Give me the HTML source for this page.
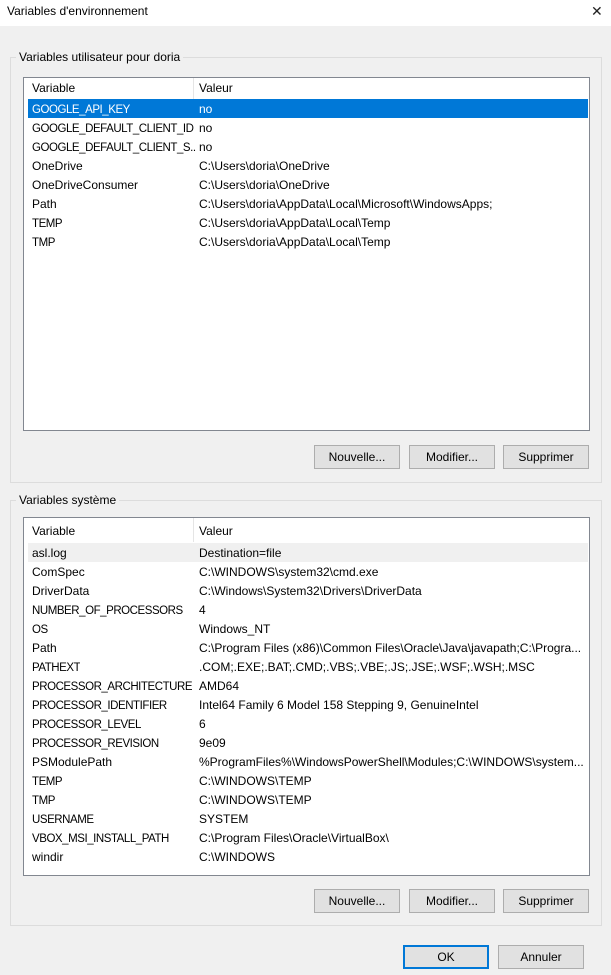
<!DOCTYPE html>
<html><head><meta charset="utf-8"><style>
*{margin:0;padding:0;box-sizing:border-box}
body{width:611px;height:975px;background:#f0f0f0;font-family:"Liberation Sans",sans-serif;font-size:12px;color:#000;position:relative;overflow:hidden}
.title{position:absolute;left:0;top:0;width:611px;height:26px;background:#fff}
.tt{position:absolute;left:7px;top:4px;font-size:12px}
.x{position:absolute;left:591px;top:3px;font-size:14px;color:#222}
.grp{position:absolute;border:1px solid #dcdcdc}
.lg{position:absolute;background:#f0f0f0;padding:0 3px}
.list{position:absolute;background:#fff;border:1px solid #828790}
.hdr{position:absolute;left:0;top:0;height:21px;width:100%}
.hdr .c{position:absolute;top:3px}
.vd{position:absolute;top:0;height:21px;border-left:1px solid #e5e5e5}
.row{position:absolute;left:4px;right:1px;height:19px;white-space:nowrap}
.row span{position:absolute;top:3px}
.row span.u{font-size:11.5px;letter-spacing:-0.45px;top:4px;max-width:164px;overflow:hidden;line-height:14px}
.sel{background:#0078d7;color:#fff}
.gry{background:#f0f0f0}
.btn{position:absolute;width:86px;height:24px;background:#e1e1e1;border:1px solid #adadad;text-align:center;line-height:22px}
.ok{border:2px solid #0078d7;line-height:20px}
</style></head><body>
<div class="title"><span class="tt">Variables d'environnement</span><span class="x">✕</span></div>

<div class="grp" style="left:10px;top:57px;width:592px;height:426px"></div>
<div class="lg" style="left:16px;top:50px">Variables utilisateur pour doria</div>
<div class="list" style="left:23px;top:77px;width:567px;height:354px">
<div class="hdr"><span class="c" style="left:8px">Variable</span><div class="vd" style="left:169px"></div><span class="c" style="left:175px">Valeur</span></div>
<div class="row sel" style="top:21px"><span class="u" style="left:4px">GOOGLE_API_KEY</span><span style="left:171px">no</span></div>
<div class="row" style="top:40px"><span class="u" style="left:4px">GOOGLE_DEFAULT_CLIENT_ID</span><span style="left:171px">no</span></div>
<div class="row" style="top:59px"><span class="u" style="left:4px">GOOGLE_DEFAULT_CLIENT_S...</span><span style="left:171px">no</span></div>
<div class="row" style="top:78px"><span style="left:4px">OneDrive</span><span style="left:171px">C:\Users\doria\OneDrive</span></div>
<div class="row" style="top:97px"><span style="left:4px">OneDriveConsumer</span><span style="left:171px">C:\Users\doria\OneDrive</span></div>
<div class="row" style="top:116px"><span style="left:4px">Path</span><span style="left:171px">C:\Users\doria\AppData\Local\Microsoft\WindowsApps;</span></div>
<div class="row" style="top:135px"><span class="u" style="left:4px">TEMP</span><span style="left:171px">C:\Users\doria\AppData\Local\Temp</span></div>
<div class="row" style="top:154px"><span class="u" style="left:4px">TMP</span><span style="left:171px">C:\Users\doria\AppData\Local\Temp</span></div>
</div>
<div class="btn" style="left:314px;top:445px">Nouvelle...</div>
<div class="btn" style="left:409px;top:445px">Modifier...</div>
<div class="btn" style="left:503px;top:445px">Supprimer</div>

<div class="grp" style="left:10px;top:500px;width:592px;height:426px"></div>
<div class="lg" style="left:16px;top:493px">Variables système</div>
<div class="list" style="left:23px;top:517px;width:567px;height:359px">
<div class="hdr" style="height:25px"><span class="c" style="left:8px;top:6px">Variable</span><div class="vd" style="left:169px;height:24px"></div><span class="c" style="left:175px;top:6px">Valeur</span></div>
<div class="row gry" style="top:25px"><span style="left:4px">asl.log</span><span style="left:171px">Destination=file</span></div>
<div class="row" style="top:44px"><span style="left:4px">ComSpec</span><span style="left:171px">C:\WINDOWS\system32\cmd.exe</span></div>
<div class="row" style="top:63px"><span style="left:4px">DriverData</span><span style="left:171px">C:\Windows\System32\Drivers\DriverData</span></div>
<div class="row" style="top:82px"><span class="u" style="left:4px">NUMBER_OF_PROCESSORS</span><span style="left:171px">4</span></div>
<div class="row" style="top:101px"><span class="u" style="left:4px">OS</span><span style="left:171px">Windows_NT</span></div>
<div class="row" style="top:120px"><span style="left:4px">Path</span><span style="left:171px">C:\Program Files (x86)\Common Files\Oracle\Java\javapath;C:\Progra...</span></div>
<div class="row" style="top:139px"><span class="u" style="left:4px">PATHEXT</span><span style="left:171px">.COM;.EXE;.BAT;.CMD;.VBS;.VBE;.JS;.JSE;.WSF;.WSH;.MSC</span></div>
<div class="row" style="top:158px"><span class="u" style="left:4px">PROCESSOR_ARCHITECTURE</span><span style="left:171px">AMD64</span></div>
<div class="row" style="top:177px"><span class="u" style="left:4px">PROCESSOR_IDENTIFIER</span><span style="left:171px">Intel64 Family 6 Model 158 Stepping 9, GenuineIntel</span></div>
<div class="row" style="top:196px"><span class="u" style="left:4px">PROCESSOR_LEVEL</span><span style="left:171px">6</span></div>
<div class="row" style="top:215px"><span class="u" style="left:4px">PROCESSOR_REVISION</span><span style="left:171px">9e09</span></div>
<div class="row" style="top:234px"><span style="left:4px">PSModulePath</span><span style="left:171px">%ProgramFiles%\WindowsPowerShell\Modules;C:\WINDOWS\system...</span></div>
<div class="row" style="top:253px"><span class="u" style="left:4px">TEMP</span><span style="left:171px">C:\WINDOWS\TEMP</span></div>
<div class="row" style="top:272px"><span class="u" style="left:4px">TMP</span><span style="left:171px">C:\WINDOWS\TEMP</span></div>
<div class="row" style="top:291px"><span class="u" style="left:4px">USERNAME</span><span style="left:171px">SYSTEM</span></div>
<div class="row" style="top:310px"><span class="u" style="left:4px">VBOX_MSI_INSTALL_PATH</span><span style="left:171px">C:\Program Files\Oracle\VirtualBox\</span></div>
<div class="row" style="top:329px"><span style="left:4px">windir</span><span style="left:171px">C:\WINDOWS</span></div>
</div>
<div class="btn" style="left:314px;top:889px">Nouvelle...</div>
<div class="btn" style="left:409px;top:889px">Modifier...</div>
<div class="btn" style="left:503px;top:889px">Supprimer</div>

<div class="btn ok" style="left:403px;top:945px">OK</div>
<div class="btn" style="left:498px;top:945px">Annuler</div>
</body></html>
